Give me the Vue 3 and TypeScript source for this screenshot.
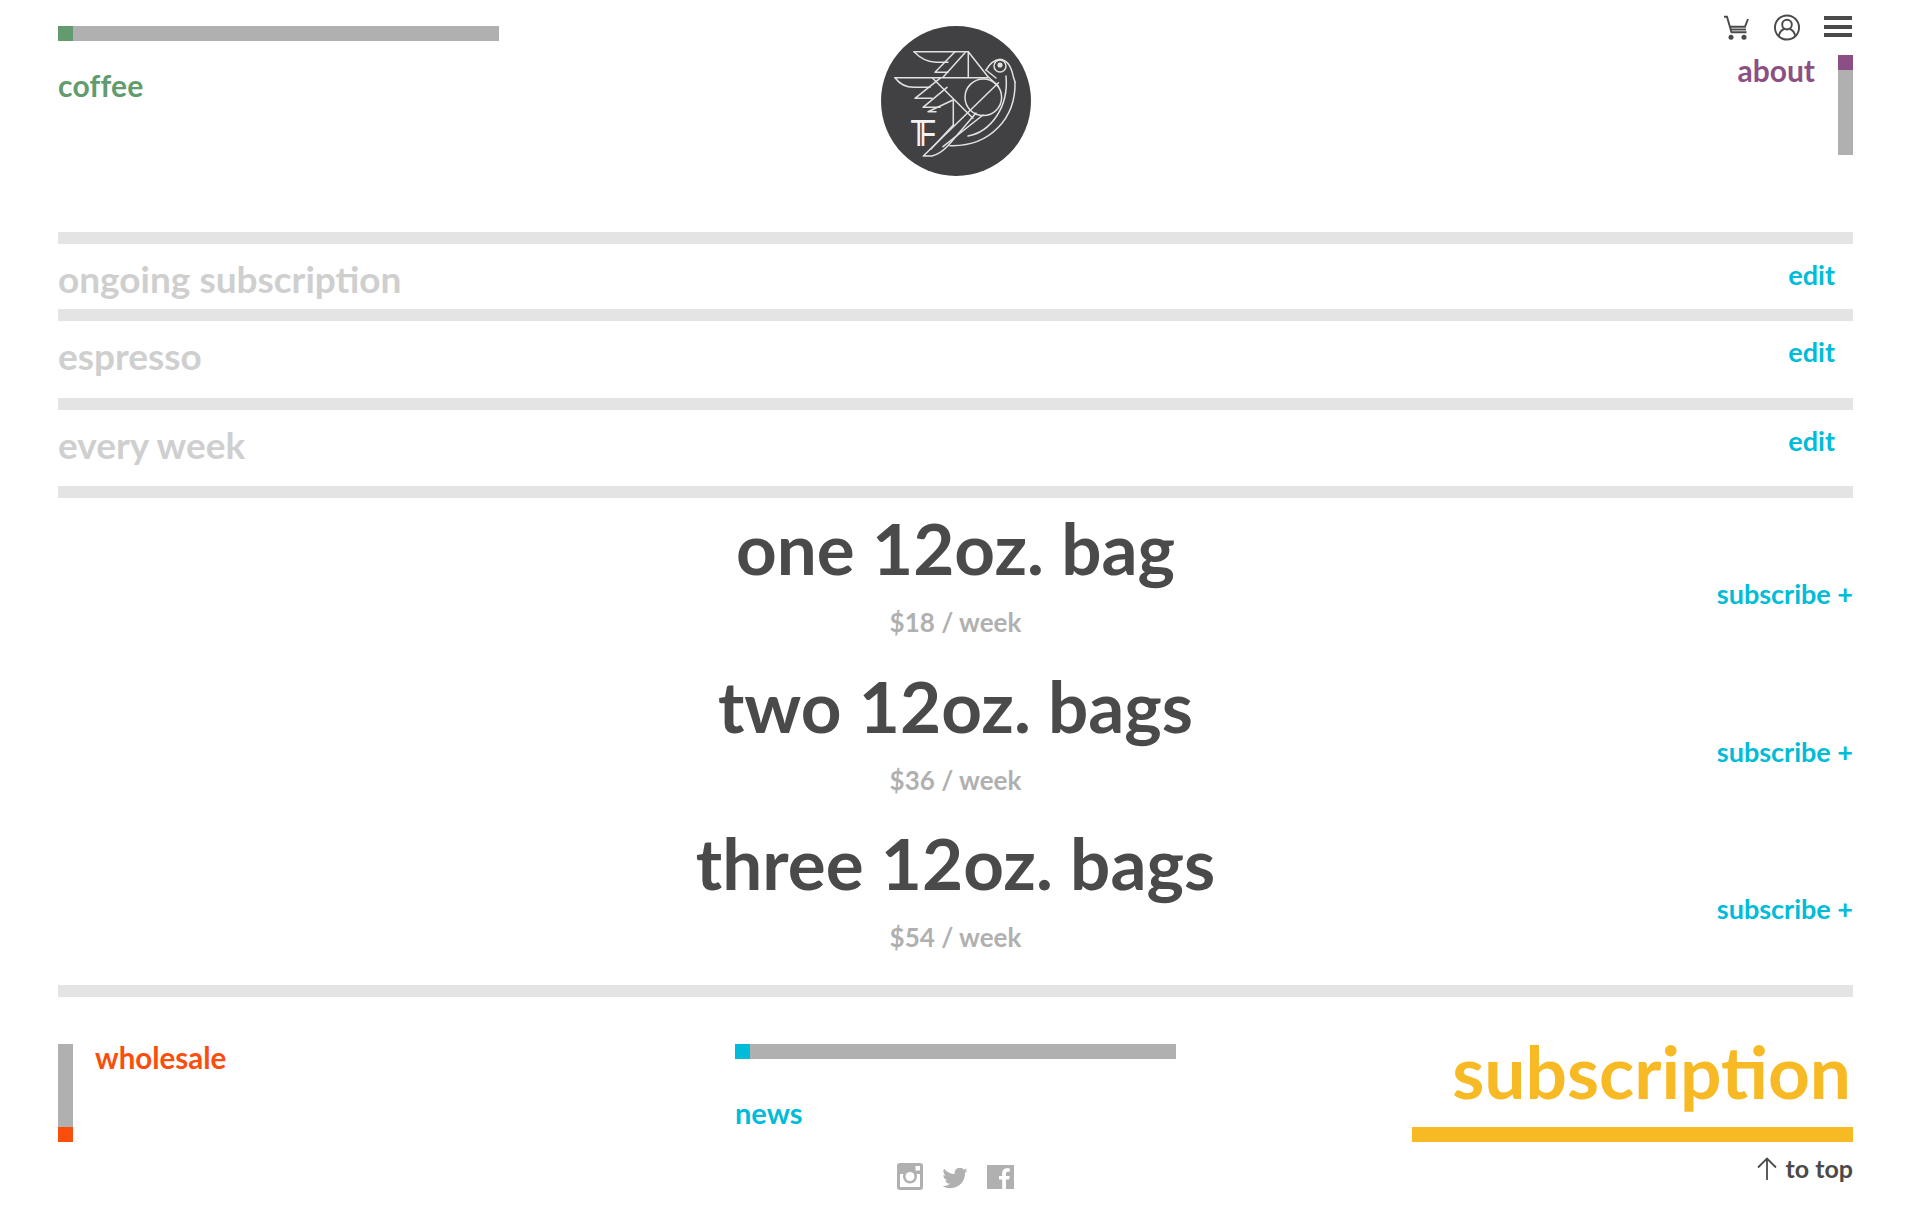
<template>
  <div class="page">
    <header class="site-head">
      <div class="head-left">
        <div class="bar bar-h"><span class="tick tick-green"></span></div>
        <a class="nav-link green coffee">coffee</a>
      </div>
      <div class="head-center">
        <svg class="logo" viewBox="881 26 150 150" fill="none">
          <circle cx="956" cy="101" r="75" fill="#414042" />
          <g stroke="#e2e2e2" stroke-width="1.5" stroke-linejoin="round" stroke-linecap="round">
            <path d="M914 51.7H968.3L988 76.7" />
            <path d="M914 51.7Q924 62 936 62.3H948" />
            <path d="M955 51.7L935 72.3H948" />
            <path d="M965 52.7L943 77.3" />
            <path d="M968.3 51.7V77.3" />
            <path d="M895 77.7H988" />
            <path d="M895 77.7Q902 87.3 914 87.3H930" />
            <path d="M940 78.3L915 98.3H932" />
            <path d="M947 87.3L923 107.3H940" />
            <path d="M953 100L928 111.7H936" />
            <path d="M932.7 78.3L973 118.3" />
            <path d="M953.3 100V125" />
            <path d="M998.5 82.7L923.3 156H932Q940 154 948 145.7L976 113" />
            <path d="M943 146.7L983 115" />
            <path d="M953.3 125L931 149" />
            <path d="M950 145.7C990 147 1016 118 1015 82" />
            <path d="M968 136C990 132 1009 108 1006 76" />
            <path d="M986 70Q992 60 1000 59.3Q1010 60 1013.3 76.7L1015 82" />
            <path d="M988 76.7L998.3 86" />
            <path d="M986 70L996 78" />
            <circle cx="983.3" cy="97.3" r="18.3" />
            <circle cx="1000" cy="66" r="6" />
            <circle cx="1000" cy="65" r="1.8" fill="#e2e2e2" />
          </g>
          <text class="mono" transform="translate(910.5 146) scale(0.75 1)">TF</text>
        </svg>
      </div>
      <div class="head-right">
        <div class="tools">
          <svg class="tool" viewBox="0 0 28 27" fill="none" stroke="#4a4a4a" stroke-width="1.9">
            <path d="M2 2.7H5L9.5 18.3H24.5M8 12.7H23L26 5" />
            <path d="M9 15.5H24" />
            <circle cx="9" cy="23.3" r="2.5" fill="#4a4a4a" stroke="none" />
            <circle cx="22" cy="23.3" r="2.5" fill="#4a4a4a" stroke="none" />
          </svg>
          <svg class="tool" viewBox="0 0 28 28" fill="none" stroke="#4a4a4a" stroke-width="2">
            <circle cx="14" cy="14" r="12.5" />
            <circle cx="14" cy="11" r="5" />
            <path d="M5.5 23C6 18.5 9 16.5 11 15.5M22.5 23C22 18.5 19 16.5 17 15.5" />
          </svg>
          <div class="burger"><span></span><span></span><span></span></div>
        </div>
        <div class="about-row">
          <a class="nav-link purple about">about</a>
          <div class="bar bar-v"><span class="tick tick-purple"></span></div>
        </div>
      </div>
    </header>

    <section class="choices">
      <div v-for="c in choices" :key="c.label" class="choice" :style="{ height: c.height + 'px' }">
        <span class="choice-label">{{ c.label }}</span>
        <a class="edit">edit</a>
      </div>
    </section>

    <section class="products">
      <div v-for="p in products" :key="p.name" class="product">
        <div class="product-main">
          <h2 class="product-name">{{ p.name }}</h2>
          <div class="product-price">{{ p.price }}</div>
        </div>
        <a class="subscribe">subscribe +</a>
      </div>
    </section>

    <footer class="site-foot">
      <div class="foot-col foot-left">
        <div class="bar bar-v foot-bar"><span class="tick tick-orange"></span></div>
        <a class="nav-link orange wholesale">wholesale</a>
      </div>
      <div class="foot-col foot-mid">
        <div class="bar bar-h"><span class="tick tick-cyan"></span></div>
        <a class="nav-link cyan news">news</a>
        <div class="social">
          <svg class="soc-ig" viewBox="0 0 26 27">
            <rect width="26" height="27" rx="3" fill="#b0b0b0" />
            <rect x="3" y="11" width="20" height="13" fill="#fff" />
            <circle cx="13" cy="13.5" r="7" fill="#b0b0b0" />
            <circle cx="13" cy="13.5" r="4.5" fill="#fff" />
            <rect x="18.5" y="3" width="4.5" height="4.5" fill="#fff" />
          </svg>
          <svg class="soc-tw" viewBox="0 0 24 20" fill="#b0b0b0">
            <path transform="translate(0 -2.5)" d="M23.95 4.57a10 10 0 01-2.82.78 4.96 4.96 0 002.16-2.72c-.95.55-2 .95-3.12 1.18a4.92 4.92 0 00-8.38 4.48C7.69 8.1 4.07 6.13 1.64 3.16a4.92 4.92 0 001.52 6.57 4.9 4.9 0 01-2.23-.61v.06a4.92 4.92 0 003.95 4.83 5 5 0 01-2.21.08 4.94 4.94 0 004.6 3.42A9.87 9.87 0 010 19.54a14 14 0 007.56 2.21c9.05 0 14-7.5 14-13.98 0-.21 0-.42-.02-.63a9.94 9.94 0 002.46-2.55z" />
          </svg>
          <svg class="soc-fb" viewBox="0 0 27 24">
            <rect width="27" height="24" fill="#b0b0b0" />
            <path fill="#fff" d="M19 24V14.5h3.2l.5-3.6H19V8.5c0-1 .3-1.8 1.8-1.8h2V3.5C22.4 3.4 21.3 3.3 20 3.3c-2.8 0-4.8 1.7-4.8 4.8v2.8h-3.2v3.6h3.2V24z" />
          </svg>
        </div>
      </div>
      <div class="foot-col foot-right">
        <div class="page-title">subscription</div>
        <div class="title-bar"></div>
        <a class="to-top">
          <svg class="arrow" viewBox="0 0 20 23" fill="none" stroke="#4a4a4a" stroke-width="1.8">
            <path d="M10 23V1.5M1 10.5L10 1.5L19 10.5" />
          </svg>
          to top
        </a>
      </div>
    </footer>
  </div>
</template>

<script setup lang="ts">
const choices = [
  { label: 'ongoing subscription', height: 77 },
  { label: 'espresso', height: 89 },
  { label: 'every week', height: 88 },
]

const products = [
  { name: 'one 12oz. bag', price: '$18 / week' },
  { name: 'two 12oz. bags', price: '$36 / week' },
  { name: 'three 12oz. bags', price: '$54 / week' },
]
</script>

<style>
html, body {
  margin: 0;
  background: #fff;
}
</style>

<style scoped>
.page {
  box-sizing: border-box;
  height: 1220px;
  padding: 0 67px 0 58px;
  overflow: hidden;
  font-family: Lato, 'Open Sans', sans-serif;
  font-weight: 700;
  color: #4a4a4a;
}

.site-head,
.site-foot {
  display: grid;
  grid-template-columns: repeat(3, 441px);
  justify-content: space-between;
}

.site-head {
  height: 232px;
}

.bar {
  background: #b0b0b0;
}

.bar-h {
  width: 441px;
  height: 15px;
}

.bar-v {
  width: 15px;
  height: 100px;
}

.tick {
  display: block;
  width: 15px;
  height: 15px;
}

.tick-green { background: #629c6e; }
.tick-purple { background: #8b4f85; }
.tick-orange { background: #fa4e0d; }
.tick-cyan { background: #00bcd9; }

.nav-link {
  display: block;
  font-size: 30px;
  line-height: 36px;
}

.green { color: #629c6e; }
.purple { color: #8b4f85; }
.orange { color: #fa4e0d; }
.cyan { color: #00bcd9; }

.head-left {
  padding-top: 26px;
}

.coffee {
  margin-top: 26px;
  letter-spacing: 0.2px;
}

.head-center {
  display: flex;
  justify-content: center;
  padding-top: 26px;
}

.logo {
  width: 150px;
  height: 150px;
}

.mono {
  font-family: 'Liberation Sans', sans-serif;
  font-size: 36px;
  font-weight: 400;
  letter-spacing: -10px;
  fill: #f2f2f2;
}

.head-right {
  display: flex;
  flex-direction: column;
  align-items: flex-end;
  padding-top: 14px;
}

.tools {
  display: flex;
  gap: 23px;
  align-items: flex-start;
  height: 27px;
  padding-right: 1px;
}

.tool {
  width: 28px;
  height: 27px;
}

.burger {
  display: flex;
  flex-direction: column;
  gap: 4.5px;
  width: 28px;
  padding-top: 2px;
}

.burger span {
  display: block;
  height: 4px;
  background: #4a4a4a;
}

.about-row {
  display: flex;
  gap: 23px;
  margin-top: 14px;
}

.about {
  margin-top: -3px;
  font-size: 30px;
}

.choices {
  border-bottom: 12px solid #e4e4e4;
}

.choice {
  display: flex;
  justify-content: space-between;
  align-items: flex-start;
  box-sizing: border-box;
  border-top: 12px solid #e4e4e4;
}

.choice-label {
  font-size: 37px;
  line-height: 44px;
  margin-top: 13px;
  color: #cfcfcf;
}

.edit {
  margin: 14px 18px 0 0;
  font-size: 27px;
  line-height: 34px;
  color: #00bcd9;
}

.products {
  height: 499px;
  box-sizing: border-box;
  border-bottom: 12px solid #e4e4e4;
}

.product {
  display: grid;
  grid-template-columns: 1fr auto 1fr;
  height: 157.5px;
}

.product-main {
  grid-column: 2;
  text-align: center;
}

.product-name {
  margin: 0;
  padding-top: 8px;
  font-size: 71px;
  font-weight: 700;
  line-height: 84px;
}

.product-price {
  margin-top: 16px;
  font-size: 26px;
  line-height: 32px;
  color: #b0b0b0;
}

.subscribe {
  grid-column: 3;
  justify-self: end;
  margin-top: 79px;
  font-size: 27px;
  line-height: 34px;
  color: #00bcd9;
}

.site-foot {
  padding-top: 47px;
}

.foot-left {
  display: flex;
  gap: 22px;
}

.foot-bar {
  height: 98px;
  display: flex;
  align-items: flex-end;
}

.wholesale {
  margin-top: -4px;
  font-size: 29.5px;
}

.news {
  margin-top: 36px;
  font-size: 29px;
}

.social {
  display: flex;
  justify-content: center;
  align-items: flex-start;
  gap: 19px;
  margin-top: 32px;
}

.soc-ig { width: 26px; height: 27px; }
.soc-tw { width: 26px; height: 21px; margin-top: 5px; }
.soc-fb { width: 27px; height: 24px; margin-top: 2px; }

.foot-right {
  display: flex;
  flex-direction: column;
  align-items: flex-end;
}

.page-title {
  margin-top: -9px;
  margin-right: 2px;
  font-size: 73px;
  line-height: 72px;
  color: #f7ba24;
  white-space: nowrap;
}

.title-bar {
  width: 441px;
  height: 15px;
  margin-top: 20px;
  background: #f7ba24;
}

.to-top {
  display: flex;
  align-items: center;
  gap: 9px;
  margin-top: 10px;
  font-size: 25px;
  line-height: 32px;
  color: #4a4a4a;
}

.arrow {
  width: 20px;
  height: 23px;
}
</style>
